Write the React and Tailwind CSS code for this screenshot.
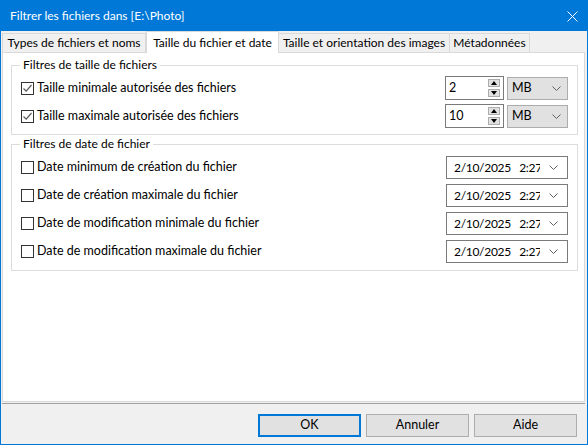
import React from "react";

const font = { fontFamily: '"Segoe UI", Lato, "Noto Sans", sans-serif' };

function Check({ checked }) {
  return (
    <span className="w-[13px] h-[13px] border border-[#333333] bg-white flex items-center justify-center shrink-0">
      {checked && (
        <svg width="11" height="11" viewBox="0 0 11 11">
          <path d="M1.5 5.5 L4.2 8.2 L9.5 2" fill="none" stroke="#5a5a5a" strokeWidth="1.2" />
        </svg>
      )}
    </span>
  );
}

function Chevron() {
  return (
    <svg width="9" height="5" viewBox="0 0 9 5">
      <path d="M0.5 0.5 L4.5 4.5 L8.5 0.5" fill="none" stroke="#606060" strokeWidth="1" />
    </svg>
  );
}

function Spin({ value }) {
  return (
    <div className="w-[59px] h-[24px] border border-[#7a7a7a] bg-white flex items-center justify-between pl-[3px] pr-[3px]">
      <span className="text-[12.5px] text-black leading-none">{value}</span>
      <div className="flex flex-col gap-[2px]">
        <span className="w-[12px] h-[8px] bg-[#e1e1e1] border border-[#adadad] flex items-center justify-center">
          <svg width="6" height="4" viewBox="0 0 6 4"><path d="M0 4 L3 0 L6 4 Z" fill="#000" /></svg>
        </span>
        <span className="w-[12px] h-[8px] bg-[#e1e1e1] border border-[#adadad] flex items-center justify-center">
          <svg width="6" height="4" viewBox="0 0 6 4"><path d="M0 0 L3 4 L6 0 Z" fill="#000" /></svg>
        </span>
      </div>
    </div>
  );
}

function Combo() {
  return (
    <div className="w-[61px] h-[23px] border border-[#adadad] bg-[#e1e1e1] flex items-center justify-between pl-[4px] pr-[6px]">
      <span className="text-[12.5px] text-black leading-none">MB</span>
      <Chevron />
    </div>
  );
}

function DatePick() {
  return (
    <div className="w-[122px] h-[23px] border border-[#7a7a7a] bg-white flex items-center pl-[7px] pr-[9px]">
      <div className="w-[86px] overflow-hidden whitespace-nowrap text-[12px] tracking-[-0.3px] text-black leading-none">
        2/10/2025&nbsp;&nbsp;&nbsp;2:27
      </div>
      <div className="flex-1" />
      <Chevron />
    </div>
  );
}

function Group({ label, children, className }) {
  return (
    <div className={"relative border border-[#dcdcdc] " + className}>
      <span className="absolute left-[8px] top-[-9px] bg-white px-[3px] text-[12px] leading-[16px] text-black">
        {label}
      </span>
      {children}
    </div>
  );
}

function Row({ checked, label, children }) {
  return (
    <div className="flex items-center justify-between">
      <div className="flex items-center gap-[3px]">
        <Check checked={checked} />
        <span className="text-[12.5px] text-black leading-none">{label}</span>
      </div>
      {children}
    </div>
  );
}

export default function App() {
  const tabs = [
    { t: "Types de fichiers et noms", w: "w-[144px]" },
    { t: "Taille du fichier et date", w: "w-[133px]", sel: true },
    { t: "Taille et orientation des images", w: "w-[172px]" },
    { t: "Métadonnées", w: "w-[81px]" },
  ];
  return (
    <div style={font} className="w-[588px] h-[445px] border border-[#0078d7] bg-[#f0f0f0] flex flex-col overflow-hidden">
      <div className="h-[30px] bg-[#0078d7] flex items-center justify-between pl-[9px] pr-[9px] shrink-0">
        <span className="text-white text-[12px]">Filtrer les fichiers dans [E:\Photo]</span>
        <svg width="11" height="11" viewBox="0 0 11 11">
          <path d="M0.5 0.5 L10.5 10.5 M10.5 0.5 L0.5 10.5" stroke="#fff" strokeWidth="1" />
        </svg>
      </div>
      <div className="flex-1 flex flex-col pl-[1px] pr-[2px]">
        <div className="h-[21px] flex items-end shrink-0 relative z-10">
          {tabs.map((tb) =>
            tb.sel ? (
              <div key={tb.t} className={tb.w + " h-[22px] mb-[-1px] bg-white border border-b-0 border-[#d9d9d9] flex items-center justify-center text-[12px] text-black"}>
                {tb.t}
              </div>
            ) : (
              <div key={tb.t} className={tb.w + " h-[19px] bg-[#f0f0f0] border border-[#d9d9d9] border-b-0 flex items-center justify-center text-[12px] text-black -ml-[1px] first:ml-0"}>
                {tb.t}
              </div>
            )
          )}
        </div>
        <div className="h-[350px] bg-white border border-[#d9d9d9] pl-[8px] pr-[6px] pt-[12px] flex flex-col gap-[9px]">
          <Group label="Filtres de taille de fichiers" className="h-[70px] pt-[10px] pl-[9px] pr-[9px] flex flex-col gap-[4px]">
            <Row checked label="Taille minimale autorisée des fichiers">
              <div className="flex items-center gap-[3px]">
                <Spin value="2" />
                <Combo />
              </div>
            </Row>
            <Row checked label="Taille maximale autorisée des fichiers">
              <div className="flex items-center gap-[3px]">
                <Spin value="10" />
                <Combo />
              </div>
            </Row>
          </Group>
          <Group label="Filtres de date de fichier" className="h-[127px] pt-[11px] pl-[9px] pr-[9px] flex flex-col gap-[5px]">
            <Row label="Date minimum de création du fichier"><DatePick /></Row>
            <Row label="Date de création maximale du fichier"><DatePick /></Row>
            <Row label="Date de modification minimale du fichier"><DatePick /></Row>
            <Row label="Date de modification maximale du fichier"><DatePick /></Row>
          </Group>
        </div>
        <div className="h-[1px] bg-[#a0a0a0] mt-[1px]" />
        <div className="flex-1 flex items-start justify-end gap-[5px] pt-[10px] pr-[8px]">
          <button className="w-[103px] h-[23px] bg-[#e1e1e1] border-2 border-[#0078d7] text-[12.5px] text-black">OK</button>
          <button className="w-[103px] h-[23px] bg-[#e1e1e1] border border-[#adadad] text-[12.5px] text-black">Annuler</button>
          <button className="w-[103px] h-[23px] bg-[#e1e1e1] border border-[#adadad] text-[12.5px] text-black">Aide</button>
        </div>
      </div>
    </div>
  );
}
